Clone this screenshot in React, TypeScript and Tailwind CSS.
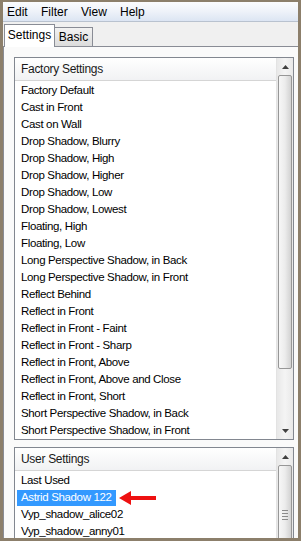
import React from "react";

const factory = [
  "Factory Default",
  "Cast in Front",
  "Cast on Wall",
  "Drop Shadow, Blurry",
  "Drop Shadow, High",
  "Drop Shadow, Higher",
  "Drop Shadow, Low",
  "Drop Shadow, Lowest",
  "Floating, High",
  "Floating, Low",
  "Long Perspective Shadow, in Back",
  "Long Perspective Shadow, in Front",
  "Reflect Behind",
  "Reflect in Front",
  "Reflect in Front - Faint",
  "Reflect in Front - Sharp",
  "Reflect in Front, Above",
  "Reflect in Front, Above and Close",
  "Reflect in Front, Short",
  "Short Perspective Shadow, in Back",
  "Short Perspective Shadow, in Front",
];

const user = ["Last Used", "Astrid Shadow 122", "Vyp_shadow_alice02", "Vyp_shadow_anny01"];

function UpArrow() {
  return (
    <div className="h-[17px] flex items-center justify-center">
      <svg width="7" height="4" viewBox="0 0 7 4">
        <path d="M0 4 L3.5 0 L7 4 Z" fill="#404040" />
      </svg>
    </div>
  );
}
function DownArrow() {
  return (
    <div className="h-[17px] flex items-center justify-center">
      <svg width="7" height="4" viewBox="0 0 7 4">
        <path d="M0 0 L3.5 4 L7 0 Z" fill="#404040" />
      </svg>
    </div>
  );
}

function Thumb({ h, grip }: { h: string; grip?: boolean }) {
  return (
    <div
      className={`${h} mx-[1px] rounded-[2px] border border-[#979797] bg-gradient-to-r from-[#f7f7f7] via-[#ececec] to-[#d2d2d2] flex items-center justify-center`}
    >
      {grip && (
        <div className="flex flex-col gap-[2px]">
          <div className="w-[6px] h-[1px] bg-[#8a8a8a]" />
          <div className="w-[6px] h-[1px] bg-[#8a8a8a]" />
          <div className="w-[6px] h-[1px] bg-[#8a8a8a]" />
          <div className="w-[6px] h-[1px] bg-[#8a8a8a]" />
        </div>
      )}
    </div>
  );
}

export default function App() {
  return (
    <div
      className="w-[301px] h-[541px] bg-[#8c7f6b] pt-[2px] pl-[3px] pr-[3px] pb-[3px] overflow-hidden"
      style={{ fontFamily: '"Liberation Sans", Arial, sans-serif' }}
    >
      <div className="h-full bg-[#f0f0f0] flex flex-col overflow-hidden">
        {/* Menu bar */}
        <div className="h-[20px] shrink-0 flex items-center text-[12px] text-black bg-gradient-to-b from-[#fbfcfe] via-[#eef2f9] to-[#dce5f3] border-b border-[#b9c2cf]">
          <span className="ml-[4px] w-[34px]">Edit</span>
          <span className="w-[40px]">Filter</span>
          <span className="w-[39px]">View</span>
          <span>Help</span>
        </div>
        {/* Tabs */}
        <div className="h-[24px] shrink-0 flex items-end relative">
          <div className="ml-[1px] w-[51px] h-[23px] bg-white border border-b-0 border-[#898c95] flex items-center justify-center text-[12px] text-black relative z-10 -mb-[1px] pb-[2px]">
            Settings
          </div>
          <div className="w-[38px] h-[19px] bg-gradient-to-b from-[#f2f2f2] to-[#dcdcdc] border border-l-0 border-b-0 border-[#898c95] flex items-center justify-center text-[12px] text-black">
            Basic
          </div>
        </div>
        {/* Panel */}
        <div className="flex-1 bg-[#fafafa] border-t border-l border-[#898c95] pl-[10px] pr-[4px] pt-[10px] flex flex-col gap-[7px] overflow-hidden">
          {/* Factory list */}
          <div className="h-[383px] shrink-0 border border-[#828790] bg-white flex overflow-hidden">
            <div className="flex-1 flex flex-col overflow-hidden">
              <div className="h-[23px] shrink-0 bg-gradient-to-b from-[#ffffff] to-[#f1f2f4] border-b border-[#d5d5d5] flex items-center pl-[6px] text-[12px] tracking-[-0.3px] text-[#1a1a1a]">
                Factory Settings
              </div>
              <div className="pt-[1px]">
                {factory.map((f) => (
                  <div key={f} className="h-[17px] flex items-center pl-[6px] text-[11.5px] tracking-[-0.35px] text-black whitespace-nowrap">
                    {f}
                  </div>
                ))}
              </div>
            </div>
            <div className="w-[17px] shrink-0 bg-gradient-to-r from-[#e8e8e8] via-[#f4f4f4] to-[#e8e8e8] border-l border-[#e3e3e3] flex flex-col">
              <UpArrow />
              <Thumb h="h-[294px]" />
              <div className="flex-1" />
              <DownArrow />
            </div>
          </div>
          {/* User list */}
          <div className="h-[120px] shrink-0 border border-[#828790] bg-white flex overflow-hidden">
            <div className="flex-1 flex flex-col overflow-hidden">
              <div className="h-[23px] shrink-0 bg-gradient-to-b from-[#ffffff] to-[#f1f2f4] border-b border-[#d5d5d5] flex items-center pl-[6px] text-[12px] tracking-[-0.3px] text-[#1a1a1a]">
                User Settings
              </div>
              <div className="pt-[1px]">
                {user.map((u, i) => (
                  <div key={u} className="h-[17px] flex items-center pl-[2px] text-[11.5px] tracking-[-0.35px] whitespace-nowrap">
                    {i === 1 ? (
                      <>
                        <span className="bg-[#3399ff] text-white px-[4px] h-[16px] flex items-center">{u}</span>
                        <svg width="37" height="14" viewBox="0 0 37 14" className="ml-[3px]">
                          <path d="M0 7 L12 0 L12 5 L37 5 L37 9 L12 9 L12 14 Z" fill="#ee1111" />
                        </svg>
                      </>
                    ) : (
                      <span className="px-[4px] text-black">{u}</span>
                    )}
                  </div>
                ))}
              </div>
            </div>
            <div className="w-[17px] shrink-0 bg-gradient-to-r from-[#e8e8e8] via-[#f4f4f4] to-[#e8e8e8] border-l border-[#e3e3e3] flex flex-col">
              <UpArrow />
              <Thumb h="h-[100px]" grip />
            </div>
          </div>
        </div>
      </div>
    </div>
  );
}
